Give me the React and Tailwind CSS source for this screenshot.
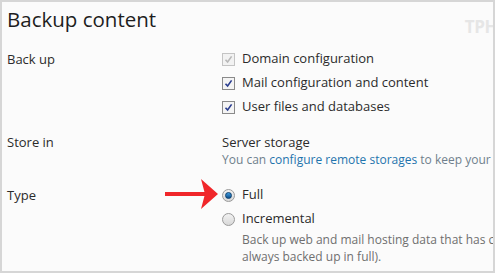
import React from 'react';

function Checkbox({ checked, disabled }) {
    return (
        <span
            className={`flex h-[13px] w-[13px] items-center justify-center border ${
                disabled ? 'border-[#c4c4c4] bg-[#f2f2f2]' : 'border-[#8a8a8a] bg-[#f4f4f4]'
            }`}
        >
            {checked && (
                <svg width="9" height="9" viewBox="0 0 9 9">
                    <path
                        d="M1.5 4.8 L3.6 7 L7.6 1.4"
                        fill="none"
                        stroke={disabled ? '#b8b8b8' : '#2a3d8f'}
                        strokeWidth="1.6"
                    />
                </svg>
            )}
        </span>
    );
}

function Radio({ checked }) {
    return (
        <span className="flex h-[13px] w-[13px] items-center justify-center rounded-full border border-[#9a9a9a] bg-gradient-to-b from-[#f2f2f2] to-[#d8d8d8]">
            {checked && <span className="h-[7px] w-[7px] rounded-full bg-gradient-to-b from-[#3f9be0] to-[#0c4f8a] border border-[#0b3f6e]" />}
        </span>
    );
}

function Row({ label, children, className = '' }) {
    return (
        <div className={`flex ${className}`}>
            <div className="w-[215px] shrink-0 text-[13px] leading-[24px] text-[#2b2b2b]">{label}</div>
            <div className="flex-1 min-w-0">{children}</div>
        </div>
    );
}

function Option({ control, text }) {
    return (
        <div className="flex h-[24px] items-center gap-[7px] whitespace-nowrap text-[13px] text-[#2b2b2b]">
            {control}
            <span>{text}</span>
        </div>
    );
}

export default function App() {
    return (
        <div
            className="relative h-[273px] w-[495px] overflow-hidden border-2 border-[#d6d6d6] bg-[#fbfbfb]"
            style={{ fontFamily: '"Open Sans", "Noto Sans", sans-serif' }}
        >
            <div className="absolute right-[-4px] top-[12px] text-[17px] font-bold tracking-tight text-[#e6e6e6]">TPH</div>

            <div className="pl-[5px] pt-[3px]">
                <h1 className="text-[20.5px] leading-[28px] text-[#1e1e1e]">Backup content</h1>

                <Row label="Back up" className="mt-[14px]">
                    <Option control={<Checkbox checked disabled />} text="Domain configuration" />
                    <Option control={<Checkbox checked />} text="Mail configuration and content" />
                    <Option control={<Checkbox checked />} text="User files and databases" />
                </Row>

                <Row label="Store in" className="mt-[11px]">
                    <div className="whitespace-nowrap text-[13px] leading-[24px] text-[#2b2b2b]">Server storage</div>
                    <div className="whitespace-nowrap text-[12px] leading-[12px] text-[#6f7f8c]">
                        You can <span className="text-[#1f74ad]">configure remote storages</span> to keep your backups there.
                    </div>
                </Row>

                <Row label="Type" className="mt-[17px]">
                    <Option control={<Radio checked />} text="Full" />
                    <Option control={<Radio />} text="Incremental" />
                    <div className="ml-[20px] whitespace-nowrap text-[12px] leading-[17px] text-[#6f6f6f]">
                        <div>Back up web and mail hosting data that has changed since the last backup (databases are</div>
                        <div>always backed up in full).</div>
                    </div>
                </Row>
            </div>

            <svg className="absolute left-[163px] top-[176px]" width="54" height="32" viewBox="0 0 54 32">
                <rect x="0" y="14" width="40" height="4" fill="#f0262a" />
                <path d="M36 1 L53 16 L36 31 L40 16 Z" fill="#f0262a" />
            </svg>
        </div>
    );
}
